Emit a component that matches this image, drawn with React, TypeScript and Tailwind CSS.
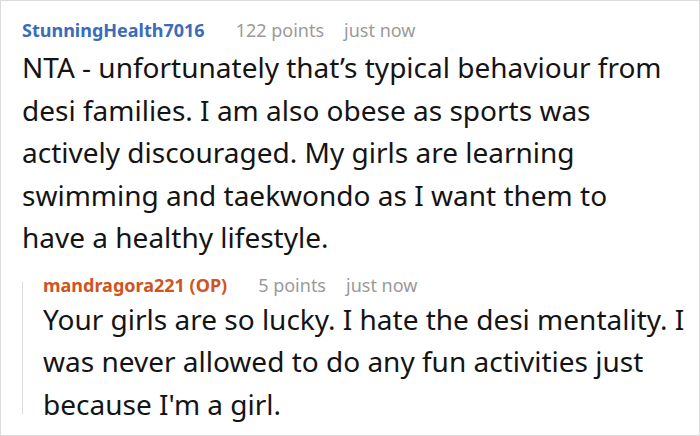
import React from "react";

export default function App() {
  return (
    <div
      className="w-[700px] h-[436px] border border-[#dcdcdc] bg-white pl-[21px] pr-[8px] pt-[17px] overflow-hidden"
      style={{ fontFamily: '"Noto Sans", "Open Sans", sans-serif' }}
    >
      <div className="flex items-baseline text-[18px] leading-[24px] whitespace-nowrap">
        <span className="font-bold text-[#3a6cb8]">StunningHealth7016</span>
        <span className="ml-[31px] text-[#9a9a9a]">122 points</span>
        <span className="ml-[20px] text-[#9a9a9a]">just now</span>
      </div>
      <p className="mt-[4px] mr-[20px] text-[28px] leading-[42.5px] text-[#141414]">
        NTA - unfortunately that’s typical behaviour from desi families. I am also obese as sports was actively discouraged. My girls are learning swimming and taekwondo as I want them to have a healthy lifestyle.
      </p>
      <div className="flex mt-[14px]">
        <div className="w-[1px] bg-[#dcdcdc] mt-[9px] mb-[11px] shrink-0" />
        <div className="pl-[20px]">
          <div className="flex items-baseline text-[18px] leading-[24px] whitespace-nowrap">
            <span className="font-bold text-[#d0541d]">mandragora221 (OP)</span>
            <span className="ml-[31px] text-[#9a9a9a]">5 points</span>
            <span className="ml-[20px] text-[#9a9a9a]">just now</span>
          </div>
          <p className="mt-[1px] text-[28px] leading-[42.5px] text-[#141414]">
            Your girls are so lucky. I hate the desi mentality. I was never allowed to do any fun activities just because I'm a girl.
          </p>
        </div>
      </div>
    </div>
  );
}
